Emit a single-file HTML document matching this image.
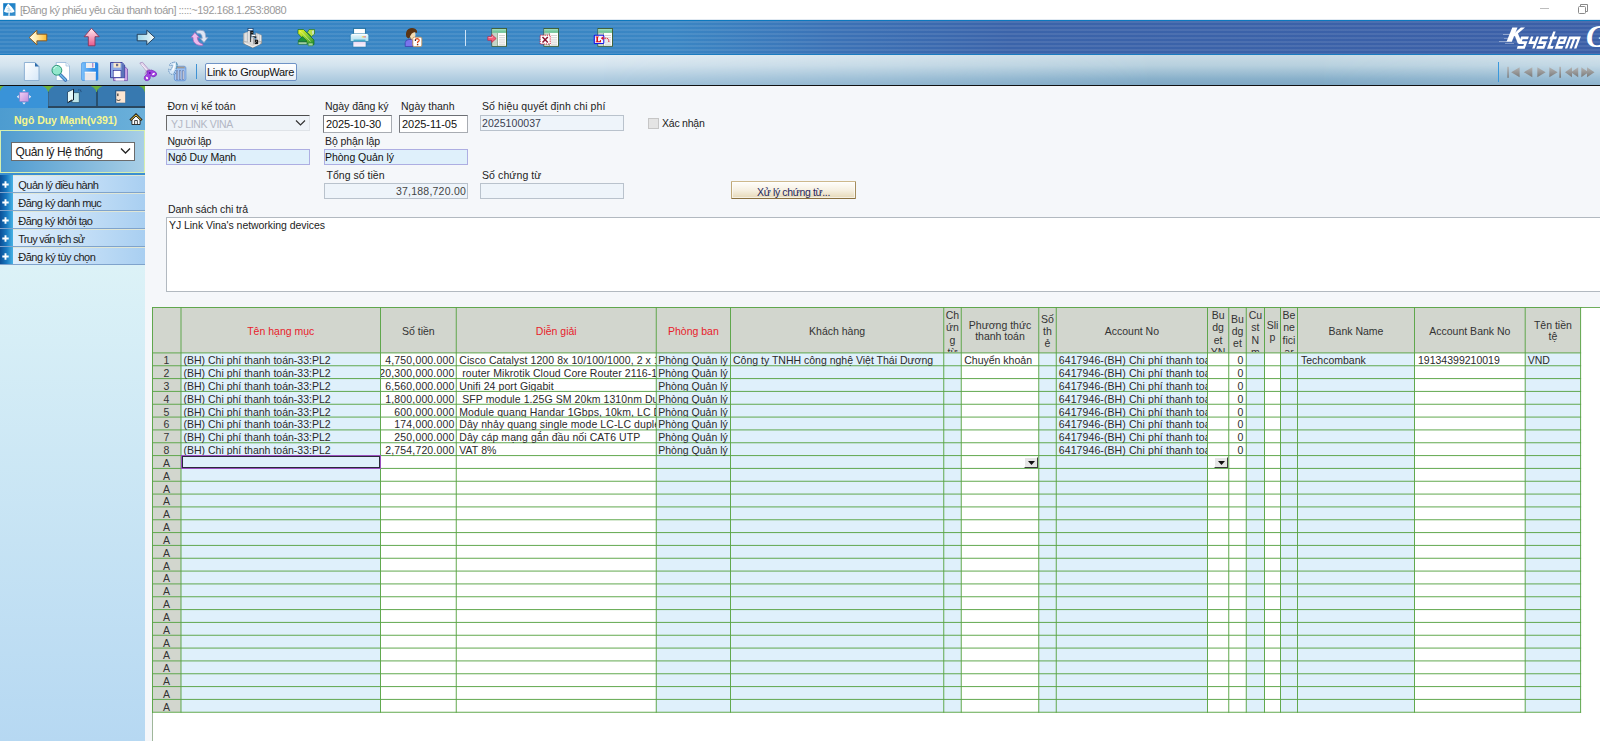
<!DOCTYPE html><html><head><meta charset="utf-8"><title>K</title><style>
*{box-sizing:border-box;margin:0;padding:0}
html,body{width:1600px;height:741px;overflow:hidden;background:#f5f7fa;font-family:"Liberation Sans",sans-serif;font-size:10.5px;color:#222}
.a{position:absolute}
.t{position:absolute;white-space:pre;line-height:13px;height:13px}
#title{left:0;top:0;width:1600px;height:20px;background:#fff}
#tb1{left:0;top:20px;width:1600px;height:35px;background:
 repeating-linear-gradient(180deg,rgba(255,255,255,0.085) 0,rgba(255,255,255,0.085) 2px,rgba(255,255,255,0) 2px,rgba(255,255,255,0) 4px),
 linear-gradient(90deg,#3583c3 0%,#3a86c4 42%,#3b72b6 52%,#3b64aa 63%,#3b5fa7 100%);
 border-top:1px solid #0d78bd;border-bottom:1px solid #1b7cc0}
#tb2{left:0;top:55px;width:1600px;height:30px;background:linear-gradient(180deg,#e3edf3 0%,#d3e3ee 35%,#b4cfe2 75%,#a3c4da 100%)}
#tb2r{left:600px;top:55px;width:1000px;height:30px;background:linear-gradient(180deg,#c9dbe5 0%,#b7d0de 35%,#88b0ca 80%,#7fa8c4 100%);-webkit-mask-image:linear-gradient(90deg,transparent 0,rgba(0,0,0,.5) 30%,#000 55%,#000 72%,rgba(0,0,0,.55) 100%);mask-image:linear-gradient(90deg,transparent 0,rgba(0,0,0,.5) 30%,#000 55%,#000 72%,rgba(0,0,0,.55) 100%)}
#tbl{left:0;top:85px;width:1600px;height:1px;background:#111}
#side{left:0;top:86px;width:145px;height:655px;background:linear-gradient(180deg,#dcf2f7 0,#dcf2f7 180px,#b6d8f2 100%)}
.inp{position:absolute;border:1px solid #b9c2cc;background:#eef4fa}
.lb{position:absolute;border:1px solid #adaee2;background:#dff0fb}
.wh{position:absolute;border:1px solid #a8acb2;border-top-color:#6c6f74;border-left-color:#77797e;background:#fff}
.mi{position:absolute;left:0;width:145px;height:18px;background:linear-gradient(90deg,#e4f1fc 0,#d4e8fa 30%,#a9cff1 100%);border-bottom:1px solid #7fa3cc;border-top:1px solid #dfe6d6}
.pl{position:absolute;left:0;top:-1px;width:12.500px;height:17px;background:linear-gradient(90deg,#0b4f96 0,#1878c0 50%,#48b2e4 100%)}
</style></head><body><div class="a" id="title"></div>
<svg class="a" style="left:2.500px;top:3.200px" width="13" height="13" viewBox="0 0 13 13"><defs><linearGradient id="gTi" x1="0" x2="1" y1="0" y2="1"><stop offset="0" stop-color="#0d78c4"/><stop offset="1" stop-color="#3a90cc"/></linearGradient></defs><rect x=".2" y=".2" width="12.300" height="12.600" fill="url(#gTi)"/><path d="M5.200 .4Q8.500 3 11.700 8.200Q11 9.600 8.500 9.700L6.700 9.500V12.800H5.300L5.600 9.500Q2.500 10 .9 8.600Q2.200 3.500 5.200 .4Z" fill="#fff"/><path d="M4.500 3.500L6 4.200M3.500 6L5.500 5.500L7.500 6.500M4 8L6 7L8.500 8M6 4.500V9" stroke="#9ccbe8" stroke-width=".6" fill="none"/></svg>
<div class="a" style="left:0;top:19px;width:1600px;height:1px;background:#e2eaf2"></div>
<div class="t" style="top:3.5px;color:#9a9a9a;font-size:11px;left:20px;letter-spacing:-0.503px;">[Đăng ký phiếu yêu cầu thanh toán] :::::~192.168.1.253:8080</div>
<div class="a" style="left:1540px;top:8px;width:9px;height:1px;background:#bdbdbd"></div>
<svg class="a" style="left:1578px;top:4px" width="10" height="10" viewBox="0 0 10 10"><path d="M2.500 2.500V.5h7v7h-2" fill="none" stroke="#8a8a8a" stroke-width="1"/><rect x=".5" y="2.500" width="7" height="7" rx="1" fill="#fff" stroke="#8a8a8a" stroke-width="1"/></svg>
<div class="a" id="tb1"></div>
<svg class="a" width="0" height="0" style="left:0;top:0"><defs>
<linearGradient id="gL" x1="0" x2="1"><stop offset="0" stop-color="#fffbea"/><stop offset=".45" stop-color="#ffe9a8"/><stop offset="1" stop-color="#fdb92c"/></linearGradient>
<linearGradient id="gU" x1="0" x2="0" y1="0" y2="1"><stop offset="0" stop-color="#fff0f4"/><stop offset=".5" stop-color="#f4a4c0"/><stop offset="1" stop-color="#e8588c"/></linearGradient>
<linearGradient id="gR" x1="0" x2="1"><stop offset="0" stop-color="#9ed6ea"/><stop offset=".6" stop-color="#cfeaf2"/><stop offset="1" stop-color="#f2fafc"/></linearGradient>
<linearGradient id="gDoc" x1="0" x2="1" y1="0" y2="1"><stop offset="0" stop-color="#ffffff"/><stop offset="1" stop-color="#d6e8f8"/></linearGradient>
<linearGradient id="gFl" x1="0" x2="1"><stop offset="0" stop-color="#7cc0fa"/><stop offset=".5" stop-color="#4a9ef0"/><stop offset="1" stop-color="#1f82e4"/></linearGradient>
<linearGradient id="gX" x1="0" x2="1" y1="0" y2="1"><stop offset="0" stop-color="#f4f820"/><stop offset=".5" stop-color="#8cd030"/><stop offset="1" stop-color="#1c8c30"/></linearGradient>
<linearGradient id="gPr" x1="0" x2="0" y1="0" y2="1"><stop offset="0" stop-color="#e8f6fa"/><stop offset="1" stop-color="#b0e0f0"/></linearGradient>
<linearGradient id="gPq" x1="0" x2="0" y1="0" y2="1"><stop offset="0" stop-color="#e4d0f0"/><stop offset="1" stop-color="#fbf6fd"/></linearGradient>
<linearGradient id="gTh" x1="0" x2="0" y1="0" y2="1"><stop offset="0" stop-color="#a8e0c0"/><stop offset="1" stop-color="#58b888"/></linearGradient>
<linearGradient id="gSq" x1="0" x2="1" y1="0" y2="1"><stop offset="0" stop-color="#f0d0f4"/><stop offset="1" stop-color="#c090dc"/></linearGradient>
<linearGradient id="gNav" x1="0" x2="0" y1="0" y2="1"><stop offset="0" stop-color="#b4b4b4"/><stop offset="1" stop-color="#7a7a7a"/></linearGradient>
</defs></svg>
<svg class="a" style="left:28px;top:29px" width="20" height="17" viewBox="0 0 20 17"><path d="M1.2 8.500L8.900 1.200V5.200H18.800V11.800H8.900V15.800Z" fill="url(#gL)" stroke="#8a5414" stroke-width="0.9" stroke-linejoin="round"/></svg>
<svg class="a" style="left:83px;top:27px" width="18" height="20" viewBox="0 0 18 20"><path d="M8.500 1.200L16.200 9.700H12V18.800H5.300V9.700H1.200Z" fill="url(#gU)" stroke="#8a3458" stroke-width="0.9" stroke-linejoin="round"/></svg>
<svg class="a" style="left:136px;top:29px" width="20" height="17" viewBox="0 0 20 17"><path d="M18.800 8.500L10.800 1.200V5.300H1.200V11.800H10.800V15.800Z" fill="url(#gR)" stroke="#1c3450" stroke-width="0.9" stroke-linejoin="round"/></svg>
<svg class="a" style="left:190px;top:29px" width="20" height="18" viewBox="0 0 20 18"><path d="M6 2.300Q10 0.300 13.500 1.800Q15.800 3.500 15.800 8.500L18 8.300L14 13.600L10.300 9.500L12.300 9.300Q12.200 6 10.500 4.700Q9 4 7.300 4.300Z" fill="#dfe6f4" stroke="#93a2c4" stroke-width="0.7"/><path d="M4.800 3.600L9.300 8.600L7.300 8.500Q7.500 11 9 13Q10.500 14.600 12.600 14.900L13 16.300Q6 17 3.600 12.500Q2.900 10.500 3 8.400L1.100 8.300Z" fill="#ecbcec" stroke="#a860b8" stroke-width="0.7"/></svg>
<svg class="a" style="left:242px;top:27px" width="22" height="22" viewBox="0 0 22 22"><path d="M1.300 14.300L10.500 12L19.700 14.300V16.400L10.800 20.800L1.300 16.400Z" fill="#d8d6d4" stroke="#7c7872" stroke-width="0.6"/><path d="M3 16.300L10.800 19.900L18 16.400" stroke="#f2f0ee" stroke-width="1.100" fill="none"/><path d="M1.500 6.600L5.800 4.800V14.900L1.500 14.400Z" fill="#f6f6f6" stroke="#8a8a8a" stroke-width="0.5"/><path d="M2.600 6.300V14.500M4.100 5.700V14.700" stroke="#c2c2c2" stroke-width="0.8"/><path d="M13.800 5.800L19.600 8.200V14.800L14.500 14Z" fill="#efefef" stroke="#8a8a8a" stroke-width="0.5"/><path d="M15.800 6.800V14.200M17.700 7.600V14.500" stroke="#c6c6c6" stroke-width="0.9"/><rect x="6" y="3.200" width="2.400" height="11.800" fill="#f4f4f4"/><rect x="6.700" y="3.500" width="0.800" height="11.500" fill="#bcbcbc"/><rect x="8.200" y="3.500" width="1" height="11.500" fill="#2a2a2a"/><rect x="6" y="1.400" width="5" height="2.300" fill="#fafafa" stroke="#123a6a" stroke-width="0.7"/><rect x="8.800" y="3.900" width="2.600" height="3.400" fill="#161616"/><rect x="9.700" y="5.200" width="0.800" height="0.800" fill="#ddd"/><rect x="9.400" y="7.600" width="4.400" height="1.900" fill="#fdfdfd" stroke="#555" stroke-width="0.4"/><rect x="10.800" y="9.500" width="3.500" height="1.300" fill="#0c0c0c"/><rect x="9.200" y="10.200" width="3.200" height="7" fill="#dcdcdc"/><rect x="11.200" y="10.800" width="1.200" height="6.400" fill="#9c9c9c"/><rect x="12.800" y="12.800" width="3.300" height="4.300" fill="#1a1a1a"/><rect x="14.200" y="13.800" width="0.800" height="0.800" fill="#ccc"/><rect x="13.300" y="15.300" width="0.700" height="0.700" fill="#bbb"/></svg>
<svg class="a" style="left:297px;top:28px" width="19" height="19" viewBox="0 0 19 19"><path d="M1 1.500H6.500L17 12V16.500H11L1 5.500Z" fill="url(#gX)" stroke="#146c24" stroke-width="0.7"/><path d="M12 1.500H17.500V6L14.500 8.500L10.500 4.500Z" fill="#b8e048" stroke="#2a7a28" stroke-width="0.7"/><path d="M15 3L16.800 2.200V6L15.500 7Z" fill="#cfe4d4"/><path d="M1.200 12.500L5.500 8.500L10 13V13.500H1.200Z" fill="#1c9038" stroke="#146c24" stroke-width="0.6"/><path d="M1.200 14H10V16.300H1.200Z" fill="#b4dcb0" stroke="#146c24" stroke-width="0.6"/><path d="M11.200 15H16V17.800H11.200Z" fill="#a4d4a0" stroke="#2a8a30" stroke-width="0.6"/><path d="M2.500 4L4 3.500L13.500 13.500" stroke="#e4f0c0" stroke-width="0.7" fill="none" opacity=".8"/></svg>
<svg class="a" style="left:349px;top:27px" width="22" height="21" viewBox="0 0 22 21"><rect x="4.600" y="1.400" width="11.800" height="6.500" fill="#fff" stroke="#1a6c9c" stroke-width="0.9"/><rect x="4" y="13" width="13" height="7" fill="url(#gPq)" stroke="#2a7cac" stroke-width="0.6"/><path d="M2.800 6.800H18.200L19.800 8.500V14.500H1.300V8.500Z" fill="url(#gPr)" stroke="#2a7cac" stroke-width="0.7"/><rect x="2.500" y="7" width="16" height="1.200" fill="#f6fcfe"/><rect x="4.500" y="12.600" width="12" height="1.300" fill="#3ca8c8"/><rect x="12.800" y="9.300" width="1.400" height="1.100" fill="#f0e040"/><rect x="14.200" y="9.300" width="1.400" height="1.100" fill="#f09040"/><rect x="15.600" y="9.300" width="1.200" height="1.100" fill="#f05070"/></svg>
<svg class="a" style="left:404px;top:27px" width="19" height="21" viewBox="0 0 19 21"><path d="M1.200 19.500V15.500Q1.500 12.800 5 12.500H9V19.500Z" fill="#7a74ec" stroke="#3030a0" stroke-width="0.6"/><path d="M4.500 5.500Q5 10 7 12Q9 13.500 10.500 12L11.500 8L11 4.500Z" fill="#f4dcb4"/><path d="M2.200 9.500Q1.200 4 4.500 2Q8 0.200 11.500 2Q13.800 3.500 13 6Q11.500 5 9.500 5.500Q7.500 6 6.500 8.500Q5.800 10.500 5 11.500Q3 11 2.200 9.500Z" fill="#5c3412"/><path d="M6.500 10.500Q7 11.500 6.800 12.800" stroke="#7a4a20" stroke-width="0.7" fill="none"/><rect x="8.800" y="10.200" width="9" height="9.400" rx="1.500" fill="#fff" stroke="#c89050" stroke-width="0.8"/><path d="M11.300 13.200Q11.500 11.600 13.300 11.600Q15.200 11.700 15.200 13.200Q15.200 14.300 13.600 15V16" fill="none" stroke="#e04818" stroke-width="1.300"/><circle cx="11.400" cy="13.200" r="0.7" fill="#111"/><rect x="12.900" y="16.800" width="1.400" height="1.500" fill="#902808"/></svg>
<div class="a" style="left:464.500px;top:29.500px;width:1.500px;height:16px;background:#cfe4f6"></div>
<svg class="a" style="left:487px;top:28px" width="21" height="20" viewBox="0 0 21 20"><rect x="5" y="0.500" width="14.500" height="17.800" fill="#fdfdfb" stroke="#3a5a2c" stroke-width="0.9"/><rect x="5.5" y="1" width="13.500" height="3.800" fill="url(#gTh)"/><rect x="5.5" y="5" width="5" height="12.800" fill="#c4d4c8"/><path d="M12 7.500h6M12 9.700h6M12 11.900h6M12 14.100h6M12 16.200h6" stroke="#c8c8c8" stroke-width="0.8"/><path d="M10.5 5v13" stroke="#6a8a6c" stroke-width="0.6"/><path d="M0.800 8.700H4.700V6.500L9.200 10.500L4.700 14.500V12.300H0.800Z" fill="#f46078" stroke="#c02848" stroke-width="0.7"/><path d="M1.500 9.500H5.300V8" stroke="#fcb0c0" stroke-width="0.8" fill="none"/></svg>
<svg class="a" style="left:539px;top:28px" width="21" height="20" viewBox="0 0 21 20"><rect x="5" y="0.500" width="14.500" height="17.800" fill="#fdfdfb" stroke="#3a5a2c" stroke-width="0.9"/><rect x="5.5" y="1" width="13.500" height="3.800" fill="url(#gTh)"/><rect x="5.5" y="5" width="5" height="12.800" fill="#c4d4c8"/><path d="M12 7.500h6M12 9.700h6M12 11.900h6M12 14.100h6M12 16.200h6" stroke="#c8c8c8" stroke-width="0.8"/><path d="M10.5 5v13" stroke="#6a8a6c" stroke-width="0.6"/><rect x="1.200" y="7.200" width="10" height="8.800" fill="#fff" stroke="#d81838" stroke-width="1" stroke-dasharray="1.200 1"/><path d="M3.500 9L8.800 14.500M8.800 9L3.500 14.500" stroke="#8a1430" stroke-width="1.500"/></svg>
<svg class="a" style="left:593px;top:28px" width="21" height="20" viewBox="0 0 21 20"><rect x="5" y="0.500" width="14.500" height="17.800" fill="#fdfdfb" stroke="#3a5a2c" stroke-width="0.9"/><rect x="5.5" y="1" width="13.500" height="3.800" fill="url(#gTh)"/><rect x="5.5" y="5" width="5" height="12.800" fill="#c4d4c8"/><path d="M12 7.500h6M12 9.700h6M12 11.900h6M12 14.100h6M12 16.200h6" stroke="#c8c8c8" stroke-width="0.8"/><path d="M10.5 5v13" stroke="#6a8a6c" stroke-width="0.6"/><rect x="1.300" y="7.200" width="9.500" height="8.300" rx="0.800" fill="#f4f4ff" stroke="#1818e8" stroke-width="1.100"/><path d="M2.600 8.500H5.800V9.300H5V13.300H6.600L7.300 11.900H8V14.200H2.600V13.400H3.400V9.300H2.600Z" fill="#e01010"/><path d="M8.500 10.200H13.500Q16.200 10.500 15.800 14" fill="none" stroke="#e01828" stroke-width="1" stroke-dasharray="2 0.800"/><path d="M10.300 8.200L8 10.200L10.300 12.200Z" fill="#e01828"/></svg>
<div class="a" style="left:1503px;top:33.700px;width:7px;height:1px;background:rgba(255,255,255,.4)"></div><div class="a" style="left:1503.500px;top:38px;width:5px;height:1.200px;background:rgba(255,255,255,.3)"></div><div class="a" style="left:1499px;top:41.200px;width:8px;height:1px;background:rgba(255,255,255,.4)"></div><div class="a" style="left:1505px;top:43px;width:9px;height:1px;background:rgba(255,255,255,.35)"></div>
<svg class="a" style="left:1500px;top:26px" width="28" height="20" viewBox="0 0 28 20"><path d="M12.300 1.600H17.500L11.800 15.700H6.500Z" fill="#fff"/><path d="M20.800 1.600H25L14.500 10.500L13 8.500Z" fill="#fff"/><path d="M14.300 8.200L17.500 6.500L22.300 17.600H17.800Z" fill="#fff"/></svg>
<svg class="a" style="left:1510px;top:30px" width="80" height="20" viewBox="0 0 80 20"><g transform="translate(11.200 6.600) skewX(-20) scale(.895 1)"><path d="M8.5 1.200H1.3V6H7.5V10.800H0 M12.3 0V6H18.5M18.5 0V12 M30.3 1.200H23.1V6H29.3V10.800H21.8 M35.1 -5V10.800H40.1M32.6 1.200H40.1 M43.7 6H50.2V1.200H43.7V10.800H50.900000000000006 M55.0 12V1.200H65.2V12M60.1 1.200V12" fill="none" stroke="#fff" stroke-width="2.700" stroke-linejoin="miter"/></g></svg>
<div class="t" style="left:1586px;top:21px;height:32px;line-height:32px;font-family:'Liberation Serif',serif;font-size:31px;font-weight:bold;font-style:italic;color:#fff">G</div>
<div class="a" id="tb2"></div><div class="a" id="tb2r"></div><div class="a" id="tbl"></div>
<svg class="a" style="left:23px;top:61px" width="18" height="21" viewBox="0 0 18 21"><path d="M1.400 1.500H12L16 5.500V19.500H1.400Z" fill="url(#gDoc)" stroke="#86acd0" stroke-width="0.9"/><path d="M12 1.500L16 5.500H12Z" fill="#2c6cac"/></svg>
<svg class="a" style="left:50px;top:61px" width="22" height="21" viewBox="0 0 22 21"><path d="M6.200 1.500H16L19.500 5V19.500H6.200Z" fill="#fff" stroke="#9cbcdc" stroke-width="0.9"/><path d="M16 1.500V5H19.500" fill="#eef6fc" stroke="#9cbcdc" stroke-width="0.7"/><path d="M10 13.500L15.500 19" stroke="#2c5cb0" stroke-width="3.200" stroke-linecap="round"/><path d="M10 13.500L15.500 19" stroke="#6cb4e0" stroke-width="2" stroke-linecap="round"/><circle cx="6.900" cy="9.300" r="4.900" fill="#92e8cc" stroke="#1c8c6c" stroke-width="0.9"/><path d="M3.800 8Q4.500 5.500 7 5.200" stroke="#d4fcec" stroke-width="1" fill="none"/></svg>
<svg class="a" style="left:80px;top:61px" width="20" height="21" viewBox="0 0 20 21"><path d="M1.500 3Q1.500 1.600 3 1.600H16.500Q18 1.600 18 3V18Q18 19.500 16.500 19.500H3Q1.500 19.500 1.500 18Z" fill="url(#gFl)" stroke="#3a8ce0" stroke-width="0.6"/><rect x="6" y="1.800" width="9" height="5.200" fill="#f0eef0"/><rect x="12" y="2" width="1.400" height="4.500" fill="#b090c8"/><rect x="4.800" y="10.800" width="11" height="8.800" fill="#e8e6ea"/><path d="M4.800 10.800H15.800V12H4.800Z" fill="#f8f8fa"/></svg>
<svg class="a" style="left:109px;top:61px" width="20" height="21" viewBox="0 0 20 21"><path d="M4.500 5H15L18.500 8V19.600H4.500Z" fill="#cca4e4" stroke="#6848a8" stroke-width="0.7"/><rect x="6.500" y="17" width="8.500" height="2.600" fill="#fbf8fd"/><path d="M1.500 1.500H13L15.600 4V16.700H1.500Z" fill="#8eaae4" stroke="#20208c" stroke-width="0.8"/><path d="M12.500 2V16.500H15.400V4.200Z" fill="#5c74b8"/><rect x="4.500" y="1.800" width="7" height="4.800" fill="#f8e8c8"/><rect x="7" y="2.800" width="2.200" height="2.400" fill="#6a6a90"/><rect x="4.200" y="9.500" width="7.800" height="7" fill="#fff" stroke="#20208c" stroke-width="0.6"/></svg>
<svg class="a" style="left:138px;top:61px" width="21" height="21" viewBox="0 0 21 21"><path d="M1.800 2L4.500 1.200L11.500 9.500L9.500 11.500Z" fill="#e4d4ec" stroke="#a488bc" stroke-width="0.7"/><path d="M3.500 3.500L9.500 10" stroke="#fff" stroke-width="0.8"/><path d="M7 13.500L9 9.500L12 8.500" fill="none" stroke="#b498c8" stroke-width="1.400"/><path d="M9 10L13.500 9Q18.500 10.500 18.800 13Q18.500 15.500 15 16L12.500 14.500L12 18Q10 20.500 7.500 19.500Q5.500 18 6.500 15.500L9 13Z" fill="#a040e0" stroke="#7020b0" stroke-width="0.6"/><ellipse cx="9" cy="17" rx="1" ry="1.400" fill="#fff" transform="rotate(-30 9 17)"/><ellipse cx="15.500" cy="13" rx="1.500" ry="1" fill="#fff" transform="rotate(-30 15.500 13)"/><circle cx="11.800" cy="12" r="1" fill="#6010a8"/></svg>
<svg class="a" style="left:167px;top:61px" width="21" height="21" viewBox="0 0 21 21"><path d="M7.300 6.800Q7.500 5.300 9 5.200H17Q18.700 5.300 18.900 6.800V18Q18.700 19.700 17 19.800H9.300Q7.500 19.700 7.300 18Z" fill="#8ab6f0" stroke="#5c8cd0" stroke-width="0.7"/><path d="M8.500 5.600H17.600V7.300H8.500Z" fill="#a39a90"/><path d="M8 8.500H18.300V18.500H8Z" fill="#a8c8f6"/><rect x="9.300" y="9.800" width="1.500" height="8.700" fill="#e8e6e8" stroke="#405a90" stroke-width="0.5"/><rect x="12.400" y="9.800" width="1.500" height="8.700" fill="#f4f4f6" stroke="#304a88" stroke-width="0.5"/><rect x="15.500" y="9.800" width="1.500" height="8.700" fill="#e8e6e8" stroke="#405a90" stroke-width="0.5"/><path d="M6.500 1.300Q9.500 0.600 10.300 2.500Q10.800 5 8.800 8.800L7.200 11.300L9 12.500L4.500 13.300L2 11.500L1.700 8L3.500 9Q5.300 6.500 5.800 4.300Q4.500 4 3 5L2.500 3.500Q4 1.800 6.500 1.300Z" fill="#d6e8f8" stroke="#2c64a4" stroke-width="0.6" stroke-dasharray="1.500 0.700"/><path d="M7 2.500Q8 5 5.500 9.500" stroke="#fff" stroke-width="1.300" fill="none"/><path d="M9.500 2Q10.500 4.500 9 8" stroke="#5c9cb8" stroke-width="1" fill="none"/></svg>
<div class="a" style="left:195.500px;top:63.500px;width:1px;height:15px;background:#3f92d4"></div>
<div class="a" style="left:1498.400px;top:61.500px;width:1px;height:20.500px;background:#3a98dc"></div>
<svg class="a" style="left:1506.5px;top:65.5px" width="90" height="13" viewBox="0 0 90 13"><rect x="0.300" y="0.800" width="1.500" height="11" fill="url(#gNav)"/><path d="M12.600 1.200V11.200L4.200 6.200Z" fill="url(#gNav)"/><path d="M25.300 1.200V11.200L16.800 6.200Z" fill="url(#gNav)"/><path d="M30.300 1.200V11.200L38.600 6.200Z" fill="url(#gNav)"/><path d="M42.300 1.200V11.200L50.600 6.200Z" fill="url(#gNav)"/><rect x="52.300" y="0.800" width="1.700" height="11" fill="url(#gNav)"/><path d="M65 1.200V11.200L58 6.200ZM71.200 1.200V11.200L64 6.200Z" fill="url(#gNav)"/><path d="M74.300 1.200V11.200L81.500 6.200ZM80 1.200V11.200L87.500 6.200Z" fill="url(#gNav)"/></svg>
<div class="a" style="left:205px;top:63px;width:92px;height:18px;border:1px solid #6f93c6;border-radius:2px;background:linear-gradient(180deg,#fff,#e9eef5)"></div>
<div class="t" style="top:66px;color:#111;font-size:11px;left:207px;letter-spacing:-0.290px;">Link to GroupWare</div>
<div class="a" id="side"></div>
<div class="a" style="left:0;top:86px;width:145px;height:7px;background:#6cb23e"></div>
<div class="a" style="left:0;top:86px;width:3.500px;height:6px;background:#6cb23e;clip-path:polygon(0 0,100% 0,0 100%)"></div>
<div class="a" style="left:0;top:86px;width:48.300px;height:22.500px;background:#3993d8;clip-path:polygon(0 5px,1px 2.500px,2.500px 1px,4px 0,calc(100% - 6px) 0,calc(100% - 3.200px) 1.500px,calc(100% - 1.300px) 3.500px,100% 6.500px,100% 100%,0 100%)"></div>
<div class="a" style="left:48.300px;top:86px;width:48.300px;height:22.500px;background:#3779b0;border-left:1px solid #27506f;clip-path:polygon(0 6.500px,1.300px 3.500px,3.200px 1.500px,6px 0,calc(100% - 6px) 0,calc(100% - 3.200px) 1.500px,calc(100% - 1.300px) 3.500px,100% 6.500px,100% 100%,0 100%)"></div>
<div class="a" style="left:96.600px;top:86px;width:48.400px;height:22.500px;background:#3779b0;border-left:1px solid #27506f;clip-path:polygon(0 6.500px,1.300px 3.500px,3.200px 1.500px,6px 0,calc(100% - 6px) 0,calc(100% - 3.200px) 1.500px,calc(100% - 1.300px) 3.500px,100% 6.500px,100% 100%,0 100%)"></div>
<div class="a" style="left:48.300px;top:105.800px;width:96.700px;height:2.700px;background:#2a475f"></div>
<div class="a" style="left:96.100px;top:92px;width:1px;height:14px;background:#27506f"></div>
<svg class="a" style="left:16px;top:88px" width="17" height="17" viewBox="0 0 17 17"><rect x="3.800" y="4.400" width="8.400" height="8.900" fill="url(#gSq)" stroke="#b47cd0" stroke-width="0.5"/><path d="M0.800 8.800L2.800 7V10.600ZM15.200 8.800L13.200 7V10.600ZM8 1.200L6.200 3.200H9.800ZM8 16.400L6.200 14.400H9.800Z" fill="#f4ecfa"/></svg>
<svg class="a" style="left:66px;top:88px" width="16" height="16" viewBox="0 0 16 16"><path d="M6 4.600H13.300V14.600H6Z" fill="#bfe6ea" stroke="#1c4c6c" stroke-width="0.7"/><path d="M1.500 4L7.500 1.200V12L1.500 15Z" fill="#e6f9f9" stroke="#1c3c5c" stroke-width="0.8"/><path d="M7.500 1.200V12" stroke="#0c1c2c" stroke-width="1"/><path d="M2.300 14.200L6.200 11.800" stroke="#0a0a0a" stroke-width="1"/><path d="M13.200 2.300L14.200 1.300M14.600 3.600H15.600M14 2.900L15.200 2.200M12.500 1.500V2.300" stroke="#1c3c64" stroke-width="0.7"/></svg>
<svg class="a" style="left:114px;top:89px" width="13" height="16" viewBox="0 0 13 16"><rect x="1.700" y="1.800" width="9.800" height="12.200" fill="#fde6d2"/><path d="M1.700 14V1.800H11.500" fill="none" stroke="#1c5084" stroke-width="1.100"/><path d="M11.500 1.800V14H1.700" fill="none" stroke="#3a6c98" stroke-width="0.6"/><rect x="3.300" y="4.500" width="1.100" height="2.600" fill="#222"/><path d="M2.500 10.800Q4.500 12.200 6.500 10.800" fill="none" stroke="#222" stroke-width="0.9"/></svg>
<div class="a" style="left:0;top:108.400px;width:145px;height:22.600px;background:linear-gradient(90deg,#4d9cd0,#5fa8d6 60%,#6bb0da)"></div>
<div class="t" style="top:113.8px;color:#f6f78f;font-weight:bold;left:14px;letter-spacing:-0.048px;">Ngô Duy Mạnh(v391)</div>
<svg class="a" style="left:129px;top:113px" width="14" height="13" viewBox="0 0 14 13"><path d="M2.900 6.500V11.500H11.100V6.500L7 2.800Z" fill="#fff" stroke="#1c1c1c" stroke-width="0.9"/><path d="M1.200 7.300L7 1.700L12.800 7.300" fill="none" stroke="#1c1c1c" stroke-width="2.300"/><path d="M1.600 7L7 1.900L12.400 7" fill="none" stroke="#f4cc3c" stroke-width="1"/><rect x="5.700" y="7.600" width="2.600" height="3.900" fill="#fff" stroke="#1c1c1c" stroke-width="0.8"/></svg>
<div class="a" style="left:0;top:130px;width:145px;height:43px;border:1px solid #d6efae;background:linear-gradient(90deg,#4f9bcf 0,#7fb7dc 55%,#a9cfe6 100%)"></div>
<div class="a" style="left:11px;top:142px;width:124px;height:19px;border:1px solid #6b6b6b;background:#fff"></div>
<div class="t" style="top:145.8px;color:#222;font-size:12px;left:15.5px;letter-spacing:-0.400px;">Quản lý Hệ thống</div>
<svg class="a" style="left:120px;top:147px" width="11" height="8" viewBox="0 0 11 8"><path d="M1 1.500l4.500 4.500L10 1.500" fill="none" stroke="#222" stroke-width="1.300"/></svg>
<div class="a" style="left:0;top:172.500px;width:145px;height:3.500px;background:#3b8fd0"></div>
<div class="mi" style="top:175px"><div class="pl"></div><svg class="a" style="left:2.400px;top:4.500px" width="7" height="7" viewBox="0 0 7 7"><path d="M3.500 0.300v6.400M0.300 3.500h6.400" stroke="#fff" stroke-width="1.900"/></svg></div>
<div class="t" style="top:178.6px;color:#222;font-size:11px;left:18.3px;letter-spacing:-0.547px;">Quản lý điều hành</div>
<div class="mi" style="top:193px"><div class="pl"></div><svg class="a" style="left:2.400px;top:4.500px" width="7" height="7" viewBox="0 0 7 7"><path d="M3.500 0.300v6.400M0.300 3.500h6.400" stroke="#fff" stroke-width="1.900"/></svg></div>
<div class="t" style="top:196.6px;color:#222;font-size:11px;left:18.3px;letter-spacing:-0.545px;">Đăng ký danh mục</div>
<div class="mi" style="top:211px"><div class="pl"></div><svg class="a" style="left:2.400px;top:4.500px" width="7" height="7" viewBox="0 0 7 7"><path d="M3.500 0.300v6.400M0.300 3.500h6.400" stroke="#fff" stroke-width="1.900"/></svg></div>
<div class="t" style="top:214.6px;color:#222;font-size:11px;left:18.3px;letter-spacing:-0.565px;">Đăng ký khởi tạo</div>
<div class="mi" style="top:229px"><div class="pl"></div><svg class="a" style="left:2.400px;top:4.500px" width="7" height="7" viewBox="0 0 7 7"><path d="M3.500 0.300v6.400M0.300 3.500h6.400" stroke="#fff" stroke-width="1.900"/></svg></div>
<div class="t" style="top:232.6px;color:#222;font-size:11px;left:18.3px;letter-spacing:-0.742px;">Truy vấn lịch sử</div>
<div class="mi" style="top:247px"><div class="pl"></div><svg class="a" style="left:2.400px;top:4.500px" width="7" height="7" viewBox="0 0 7 7"><path d="M3.500 0.300v6.400M0.300 3.500h6.400" stroke="#fff" stroke-width="1.900"/></svg></div>
<div class="t" style="top:250.6px;color:#222;font-size:11px;left:18.3px;letter-spacing:-0.500px;">Đăng ký tùy chọn</div>
<div class="t" style="top:100px;color:#222;left:167.5px;letter-spacing:-0.012px;">Đơn vị kế toán</div>
<div class="t" style="top:100px;color:#222;left:325px;letter-spacing:-0.060px;">Ngày đăng ký</div>
<div class="t" style="top:100px;color:#222;left:401px;letter-spacing:-0.022px;">Ngày thanh</div>
<div class="t" style="top:100px;color:#222;left:482px;letter-spacing:0.102px;">Số hiệu quyết định chi phí</div>
<div class="t" style="top:134.5px;color:#222;left:167.5px;letter-spacing:-0.345px;">Người lập</div>
<div class="t" style="top:134.5px;color:#222;left:325px;letter-spacing:-0.097px;">Bộ phận lập</div>
<div class="t" style="top:168.8px;color:#222;left:326.5px;letter-spacing:0.017px;">Tổng số tiền</div>
<div class="t" style="top:168.8px;color:#222;left:482px;letter-spacing:0.098px;">Số chứng từ</div>
<div class="t" style="top:203px;color:#222;left:168px;letter-spacing:-0.101px;">Danh sách chi trả</div>
<div class="a" style="left:166px;top:115px;width:144px;height:16px;background:#eef3f8;border-top:1px solid #4d4d4d;border-left:1px solid #6a6a6a;border-bottom:1px solid #dfe3e8;border-right:1px solid #dfe3e8"></div>
<div class="t" style="top:117.5px;color:#b3b7c4;left:171px;letter-spacing:-0.329px;">YJ LINK VINA</div>
<svg class="a" style="left:295px;top:119px" width="11" height="8" viewBox="0 0 11 8"><path d="M1 1.500l4.500 4.500L10 1.500" fill="none" stroke="#333" stroke-width="1.200"/></svg>
<div class="wh" style="left:323px;top:114.500px;width:69px;height:18.500px"></div>
<div class="wh" style="left:399px;top:114.500px;width:69px;height:18.500px"></div>
<div class="t" style="top:117.8px;color:#111;font-size:11px;left:326px;letter-spacing:-0.128px;">2025-10-30</div>
<div class="t" style="top:117.8px;color:#111;font-size:11px;left:402px;letter-spacing:-0.045px;">2025-11-05</div>
<div class="inp" style="left:480px;top:115px;width:144px;height:16px"></div>
<div class="t" style="top:116.7px;color:#3a4050;left:482px;letter-spacing:0.059px;">2025100037</div>
<div class="a" style="left:648px;top:117.500px;width:11px;height:11px;background:#e4e4e4;border:1px solid #c6c6c6"></div>
<div class="t" style="top:117px;color:#222;left:662px;letter-spacing:-0.234px;">Xác nhận</div>
<div class="lb" style="left:166px;top:149px;width:144px;height:16px"></div>
<div class="lb" style="left:323.500px;top:149px;width:144px;height:16px"></div>
<div class="t" style="top:150.5px;color:#111;left:168px;letter-spacing:-0.171px;">Ngô Duy Mạnh</div>
<div class="t" style="top:150.5px;color:#111;left:325px;letter-spacing:-0.036px;">Phòng Quản lý</div>
<div class="inp" style="left:323.500px;top:183px;width:144px;height:16px"></div>
<div class="inp" style="left:480px;top:183px;width:144px;height:16px"></div>
<div class="t" style="top:184.5px;color:#444;right:1134px;letter-spacing:0.219px;">37,188,720.00</div>
<div class="a" style="left:731px;top:181px;width:125px;height:18px;border:1px solid #a48c5c;border-top-color:#cdb88c;border-left-color:#bfa878;border-bottom-color:#8a7040;border-radius:1px;background:linear-gradient(180deg,#fffefb 0,#f6f0e2 50%,#e6d9b8 100%);box-shadow:inset 0 0 0 1px rgba(255,255,255,.6)"></div>
<div class="t" style="top:185.5px;color:#24245c;left:593.5px;width:400px;text-align:center;letter-spacing:-0.346px;">Xử lý chứng từ...</div>
<div class="a" style="left:166px;top:217px;width:1440px;height:75px;background:#fff;border:1px solid #b2b9c0"></div>
<div class="t" style="top:219px;color:#222;left:169px;letter-spacing:-0.050px;">YJ Link Vina&#x27;s networking devices</div>
<div class="a" style="left:152px;top:307px;width:1460px;height:440px;background:#fff;border-top:1px solid #6fae5c;border-left:1px solid #9fb69a"></div>
<div class="a" style="left:152px;top:307px;width:1428.6px;height:45.91699999999997px;background:#d2d6ce"></div>
<div class="a" style="left:152px;top:352.917px;width:29px;height:359.33324px;background:#d2d6ce"></div>
<div class="a" style="left:181px;top:352.917px;width:199.5px;height:359.33324px;background:#dff0fb"></div>
<div class="a" style="left:380.5px;top:352.917px;width:75.75px;height:359.33324px;background:#fff"></div>
<div class="a" style="left:456.25px;top:352.917px;width:200.0px;height:359.33324px;background:#fff"></div>
<div class="a" style="left:656.25px;top:352.917px;width:74.25px;height:359.33324px;background:#dff0fb"></div>
<div class="a" style="left:730.5px;top:352.917px;width:213.25px;height:359.33324px;background:#dff0fb"></div>
<div class="a" style="left:943.75px;top:352.917px;width:17.5px;height:359.33324px;background:#dff0fb"></div>
<div class="a" style="left:961.25px;top:352.917px;width:77.5px;height:359.33324px;background:#fff"></div>
<div class="a" style="left:1038.75px;top:352.917px;width:17.5px;height:359.33324px;background:#dff0fb"></div>
<div class="a" style="left:1056.25px;top:352.917px;width:151.25px;height:359.33324px;background:#dff0fb"></div>
<div class="a" style="left:1207.5px;top:352.917px;width:21.25px;height:359.33324px;background:#fff"></div>
<div class="a" style="left:1228.75px;top:352.917px;width:17.5px;height:359.33324px;background:#fff"></div>
<div class="a" style="left:1246.25px;top:352.917px;width:18.25px;height:359.33324px;background:#dff0fb"></div>
<div class="a" style="left:1264.5px;top:352.917px;width:16.0px;height:359.33324px;background:#fff"></div>
<div class="a" style="left:1280.5px;top:352.917px;width:17.0px;height:359.33324px;background:#dff0fb"></div>
<div class="a" style="left:1297.5px;top:352.917px;width:117.0px;height:359.33324px;background:#dff0fb"></div>
<div class="a" style="left:1414.5px;top:352.917px;width:110.70000000000005px;height:359.33324px;background:#fff"></div>
<div class="a" style="left:1525.2px;top:352.917px;width:55.399999999999864px;height:359.33324px;background:#dff0fb"></div>
<svg class="a" style="left:152px;top:307px" width="1431" height="407"><path d="M0 0.5H1429.6M0 45.917H1429.10M0 58.750H1429.10M0 71.584H1429.10M0 84.417H1429.10M0 97.250H1429.10M0 110.084H1429.10M0 122.917H1429.10M0 135.750H1429.10M0 148.584H1429.10M0 161.417H1429.10M0 174.250H1429.10M0 187.084H1429.10M0 199.917H1429.10M0 212.750H1429.10M0 225.584H1429.10M0 238.417H1429.10M0 251.250H1429.10M0 264.084H1429.10M0 276.917H1429.10M0 289.750H1429.10M0 302.584H1429.10M0 315.417H1429.10M0 328.250H1429.10M0 341.084H1429.10M0 353.917H1429.10M0 366.750H1429.10M0 379.584H1429.10M0 392.417H1429.10M0 405.250H1429.10M0.50 0V405.75M29.00 0V405.75M228.50 0V405.75M304.25 0V405.75M504.25 0V405.75M578.50 0V405.75M791.75 0V405.75M809.25 0V405.75M886.75 0V405.75M904.25 0V405.75M1055.50 0V405.75M1076.75 0V405.75M1094.25 0V405.75M1112.50 0V405.75M1128.50 0V405.75M1145.50 0V405.75M1262.50 0V405.75M1373.20 0V405.75M1428.60 0V405.75" fill="none" stroke="#5aa446" stroke-width="0.95"/></svg>
<div class="t" style="top:324.56px;color:#e8212b;left:80.75px;width:400px;text-align:center;">Tên hạng mục</div>
<div class="t" style="top:324.56px;color:#333;left:218.375px;width:400px;text-align:center;">Số tiền</div>
<div class="t" style="top:324.56px;color:#e8212b;left:356.25px;width:400px;text-align:center;">Diễn giải</div>
<div class="t" style="top:324.56px;color:#e8212b;left:493.375px;width:400px;text-align:center;">Phòng ban</div>
<div class="t" style="top:324.56px;color:#333;left:637.125px;width:400px;text-align:center;">Khách hàng</div>
<div class="t" style="top:318.81px;color:#333;left:800.0px;width:400px;text-align:center;">Phương thức</div>
<div class="t" style="top:330.31px;color:#333;left:800.0px;width:400px;text-align:center;">thanh toán</div>
<div class="t" style="top:324.56px;color:#333;left:931.875px;width:400px;text-align:center;">Account No</div>
<div class="t" style="top:324.56px;color:#333;left:1156.0px;width:400px;text-align:center;">Bank Name</div>
<div class="t" style="top:324.56px;color:#333;left:1269.85px;width:400px;text-align:center;">Account Bank No</div>
<div class="t" style="top:318.81px;color:#333;left:1352.9px;width:400px;text-align:center;">Tên tiền</div>
<div class="t" style="top:330.31px;color:#333;left:1352.9px;width:400px;text-align:center;">tệ</div>
<div class="a" style="left:943.75px;top:308px;width:17.5px;height:44.41699999999997px;overflow:hidden;text-align:center;color:#333"><div style="position:absolute;left:0;right:0;top:1px"><div style="height:12.3px;line-height:12.3px">Ch</div><div style="height:12.3px;line-height:12.3px">ứn</div><div style="height:12.3px;line-height:12.3px">g</div><div style="height:12.3px;line-height:12.3px">từ</div></div></div>
<div class="a" style="left:1038.75px;top:308px;width:17.5px;height:44.41699999999997px;overflow:hidden;text-align:center;color:#333"><div style="position:absolute;left:0;right:0;top:4.5px"><div style="height:12.3px;line-height:12.3px">Số</div><div style="height:12.3px;line-height:12.3px">th</div><div style="height:12.3px;line-height:12.3px">ẻ</div></div></div>
<div class="a" style="left:1207.5px;top:308px;width:21.25px;height:44.41699999999997px;overflow:hidden;text-align:center;color:#333"><div style="position:absolute;left:0;right:0;top:1px"><div style="height:12.3px;line-height:12.3px">Bu</div><div style="height:12.3px;line-height:12.3px">dg</div><div style="height:12.3px;line-height:12.3px">et</div><div style="height:12.3px;line-height:12.3px">YN</div></div></div>
<div class="a" style="left:1228.75px;top:308px;width:17.5px;height:44.41699999999997px;overflow:hidden;text-align:center;color:#333"><div style="position:absolute;left:0;right:0;top:4.5px"><div style="height:12.3px;line-height:12.3px">Bu</div><div style="height:12.3px;line-height:12.3px">dg</div><div style="height:12.3px;line-height:12.3px">et</div></div></div>
<div class="a" style="left:1246.25px;top:308px;width:18.25px;height:44.41699999999997px;overflow:hidden;text-align:center;color:#333"><div style="position:absolute;left:0;right:0;top:1px"><div style="height:12.3px;line-height:12.3px">Cu</div><div style="height:12.3px;line-height:12.3px">st</div><div style="height:12.3px;line-height:12.3px">N</div><div style="height:12.3px;line-height:12.3px">m</div></div></div>
<div class="a" style="left:1264.5px;top:308px;width:16.0px;height:44.41699999999997px;overflow:hidden;text-align:center;color:#333"><div style="position:absolute;left:0;right:0;top:10.5px"><div style="height:12.3px;line-height:12.3px">Sli</div><div style="height:12.3px;line-height:12.3px">p</div></div></div>
<div class="a" style="left:1280.5px;top:308px;width:17.0px;height:44.41699999999997px;overflow:hidden;text-align:center;color:#333"><div style="position:absolute;left:0;right:0;top:1px"><div style="height:12.3px;line-height:12.3px">Be</div><div style="height:12.3px;line-height:12.3px">ne</div><div style="height:12.3px;line-height:12.3px">fici</div><div style="height:12.3px;line-height:12.3px">ar</div></div></div>
<div class="a" style="left:152.5px;top:353.42px;width:28px;height:12.33px;overflow:hidden"><div class="t" style="left:0;right:0;text-align:center;top:0.900px;color:#333">1</div></div>
<div class="a" style="left:181.5px;top:353.42px;width:198.5px;height:12.33px;overflow:hidden"><div class="t" style="left:2px;top:0.900px;color:#2a2a2a;letter-spacing:0px">(BH) Chi phí thanh toán-33:PL2</div></div>
<div class="a" style="left:381.0px;top:353.42px;width:74.75px;height:12.33px;overflow:hidden"><div class="t" style="right:1.35px;top:0.900px;color:#2a2a2a;letter-spacing:0.15px">4,750,000.000</div></div>
<div class="a" style="left:456.75px;top:353.42px;width:199.0px;height:12.33px;overflow:hidden"><div class="t" style="left:2.5px;top:0.900px;color:#2a2a2a;letter-spacing:0.08px">Cisco Catalyst 1200 8x 10/100/1000, 2 x 10G SFP+</div></div>
<div class="a" style="left:656.75px;top:353.42px;width:73.25px;height:12.33px;overflow:hidden"><div class="t" style="left:1.5px;top:0.900px;color:#2a2a2a;letter-spacing:0px">Phòng Quản lý</div></div>
<div class="a" style="left:1056.75px;top:353.42px;width:150.25px;height:12.33px;overflow:hidden"><div class="t" style="left:2px;top:0.900px;color:#2a2a2a;letter-spacing:0.1px">6417946-(BH) Chi phí thanh toán</div></div>
<div class="a" style="left:1229.25px;top:353.42px;width:16.5px;height:12.33px;overflow:hidden"><div class="t" style="right:2.5px;top:0.900px;color:#2a2a2a;letter-spacing:0px">0</div></div>
<div class="a" style="left:152.5px;top:366.25px;width:28px;height:12.33px;overflow:hidden"><div class="t" style="left:0;right:0;text-align:center;top:0.900px;color:#333">2</div></div>
<div class="a" style="left:181.5px;top:366.25px;width:198.5px;height:12.33px;overflow:hidden"><div class="t" style="left:2px;top:0.900px;color:#2a2a2a;letter-spacing:0px">(BH) Chi phí thanh toán-33:PL2</div></div>
<div class="a" style="left:381.0px;top:366.25px;width:74.75px;height:12.33px;overflow:hidden"><div class="t" style="right:1.35px;top:0.900px;color:#2a2a2a;letter-spacing:0.15px">20,300,000.000</div></div>
<div class="a" style="left:456.75px;top:366.25px;width:199.0px;height:12.33px;overflow:hidden"><div class="t" style="left:2.5px;top:0.900px;color:#2a2a2a;letter-spacing:0.08px"> router Mikrotik Cloud Core Router 2116-12</div></div>
<div class="a" style="left:656.75px;top:366.25px;width:73.25px;height:12.33px;overflow:hidden"><div class="t" style="left:1.5px;top:0.900px;color:#2a2a2a;letter-spacing:0px">Phòng Quản lý</div></div>
<div class="a" style="left:1056.75px;top:366.25px;width:150.25px;height:12.33px;overflow:hidden"><div class="t" style="left:2px;top:0.900px;color:#2a2a2a;letter-spacing:0.1px">6417946-(BH) Chi phí thanh toán</div></div>
<div class="a" style="left:1229.25px;top:366.25px;width:16.5px;height:12.33px;overflow:hidden"><div class="t" style="right:2.5px;top:0.900px;color:#2a2a2a;letter-spacing:0px">0</div></div>
<div class="a" style="left:152.5px;top:379.08px;width:28px;height:12.33px;overflow:hidden"><div class="t" style="left:0;right:0;text-align:center;top:0.900px;color:#333">3</div></div>
<div class="a" style="left:181.5px;top:379.08px;width:198.5px;height:12.33px;overflow:hidden"><div class="t" style="left:2px;top:0.900px;color:#2a2a2a;letter-spacing:0px">(BH) Chi phí thanh toán-33:PL2</div></div>
<div class="a" style="left:381.0px;top:379.08px;width:74.75px;height:12.33px;overflow:hidden"><div class="t" style="right:1.35px;top:0.900px;color:#2a2a2a;letter-spacing:0.15px">6,560,000.000</div></div>
<div class="a" style="left:456.75px;top:379.08px;width:199.0px;height:12.33px;overflow:hidden"><div class="t" style="left:2.5px;top:0.900px;color:#2a2a2a;letter-spacing:0.08px">Unifi 24 port Gigabit</div></div>
<div class="a" style="left:656.75px;top:379.08px;width:73.25px;height:12.33px;overflow:hidden"><div class="t" style="left:1.5px;top:0.900px;color:#2a2a2a;letter-spacing:0px">Phòng Quản lý</div></div>
<div class="a" style="left:1056.75px;top:379.08px;width:150.25px;height:12.33px;overflow:hidden"><div class="t" style="left:2px;top:0.900px;color:#2a2a2a;letter-spacing:0.1px">6417946-(BH) Chi phí thanh toán</div></div>
<div class="a" style="left:1229.25px;top:379.08px;width:16.5px;height:12.33px;overflow:hidden"><div class="t" style="right:2.5px;top:0.900px;color:#2a2a2a;letter-spacing:0px">0</div></div>
<div class="a" style="left:152.5px;top:391.92px;width:28px;height:12.33px;overflow:hidden"><div class="t" style="left:0;right:0;text-align:center;top:0.900px;color:#333">4</div></div>
<div class="a" style="left:181.5px;top:391.92px;width:198.5px;height:12.33px;overflow:hidden"><div class="t" style="left:2px;top:0.900px;color:#2a2a2a;letter-spacing:0px">(BH) Chi phí thanh toán-33:PL2</div></div>
<div class="a" style="left:381.0px;top:391.92px;width:74.75px;height:12.33px;overflow:hidden"><div class="t" style="right:1.35px;top:0.900px;color:#2a2a2a;letter-spacing:0.15px">1,800,000.000</div></div>
<div class="a" style="left:456.75px;top:391.92px;width:199.0px;height:12.33px;overflow:hidden"><div class="t" style="left:2.5px;top:0.900px;color:#2a2a2a;letter-spacing:0.08px"> SFP module 1.25G SM 20km 1310nm Dual</div></div>
<div class="a" style="left:656.75px;top:391.92px;width:73.25px;height:12.33px;overflow:hidden"><div class="t" style="left:1.5px;top:0.900px;color:#2a2a2a;letter-spacing:0px">Phòng Quản lý</div></div>
<div class="a" style="left:1056.75px;top:391.92px;width:150.25px;height:12.33px;overflow:hidden"><div class="t" style="left:2px;top:0.900px;color:#2a2a2a;letter-spacing:0.1px">6417946-(BH) Chi phí thanh toán</div></div>
<div class="a" style="left:1229.25px;top:391.92px;width:16.5px;height:12.33px;overflow:hidden"><div class="t" style="right:2.5px;top:0.900px;color:#2a2a2a;letter-spacing:0px">0</div></div>
<div class="a" style="left:152.5px;top:404.75px;width:28px;height:12.33px;overflow:hidden"><div class="t" style="left:0;right:0;text-align:center;top:0.900px;color:#333">5</div></div>
<div class="a" style="left:181.5px;top:404.75px;width:198.5px;height:12.33px;overflow:hidden"><div class="t" style="left:2px;top:0.900px;color:#2a2a2a;letter-spacing:0px">(BH) Chi phí thanh toán-33:PL2</div></div>
<div class="a" style="left:381.0px;top:404.75px;width:74.75px;height:12.33px;overflow:hidden"><div class="t" style="right:1.35px;top:0.900px;color:#2a2a2a;letter-spacing:0.15px">600,000.000</div></div>
<div class="a" style="left:456.75px;top:404.75px;width:199.0px;height:12.33px;overflow:hidden"><div class="t" style="left:2.5px;top:0.900px;color:#2a2a2a;letter-spacing:0.08px">Module quang Handar 1Gbps, 10km, LC Dup</div></div>
<div class="a" style="left:656.75px;top:404.75px;width:73.25px;height:12.33px;overflow:hidden"><div class="t" style="left:1.5px;top:0.900px;color:#2a2a2a;letter-spacing:0px">Phòng Quản lý</div></div>
<div class="a" style="left:1056.75px;top:404.75px;width:150.25px;height:12.33px;overflow:hidden"><div class="t" style="left:2px;top:0.900px;color:#2a2a2a;letter-spacing:0.1px">6417946-(BH) Chi phí thanh toán</div></div>
<div class="a" style="left:1229.25px;top:404.75px;width:16.5px;height:12.33px;overflow:hidden"><div class="t" style="right:2.5px;top:0.900px;color:#2a2a2a;letter-spacing:0px">0</div></div>
<div class="a" style="left:152.5px;top:417.58px;width:28px;height:12.33px;overflow:hidden"><div class="t" style="left:0;right:0;text-align:center;top:0.900px;color:#333">6</div></div>
<div class="a" style="left:181.5px;top:417.58px;width:198.5px;height:12.33px;overflow:hidden"><div class="t" style="left:2px;top:0.900px;color:#2a2a2a;letter-spacing:0px">(BH) Chi phí thanh toán-33:PL2</div></div>
<div class="a" style="left:381.0px;top:417.58px;width:74.75px;height:12.33px;overflow:hidden"><div class="t" style="right:1.35px;top:0.900px;color:#2a2a2a;letter-spacing:0.15px">174,000.000</div></div>
<div class="a" style="left:456.75px;top:417.58px;width:199.0px;height:12.33px;overflow:hidden"><div class="t" style="left:2.5px;top:0.900px;color:#2a2a2a;letter-spacing:0.08px">Dây nhảy quang single mode LC-LC duplex 3</div></div>
<div class="a" style="left:656.75px;top:417.58px;width:73.25px;height:12.33px;overflow:hidden"><div class="t" style="left:1.5px;top:0.900px;color:#2a2a2a;letter-spacing:0px">Phòng Quản lý</div></div>
<div class="a" style="left:1056.75px;top:417.58px;width:150.25px;height:12.33px;overflow:hidden"><div class="t" style="left:2px;top:0.900px;color:#2a2a2a;letter-spacing:0.1px">6417946-(BH) Chi phí thanh toán</div></div>
<div class="a" style="left:1229.25px;top:417.58px;width:16.5px;height:12.33px;overflow:hidden"><div class="t" style="right:2.5px;top:0.900px;color:#2a2a2a;letter-spacing:0px">0</div></div>
<div class="a" style="left:152.5px;top:430.42px;width:28px;height:12.33px;overflow:hidden"><div class="t" style="left:0;right:0;text-align:center;top:0.900px;color:#333">7</div></div>
<div class="a" style="left:181.5px;top:430.42px;width:198.5px;height:12.33px;overflow:hidden"><div class="t" style="left:2px;top:0.900px;color:#2a2a2a;letter-spacing:0px">(BH) Chi phí thanh toán-33:PL2</div></div>
<div class="a" style="left:381.0px;top:430.42px;width:74.75px;height:12.33px;overflow:hidden"><div class="t" style="right:1.35px;top:0.900px;color:#2a2a2a;letter-spacing:0.15px">250,000.000</div></div>
<div class="a" style="left:456.75px;top:430.42px;width:199.0px;height:12.33px;overflow:hidden"><div class="t" style="left:2.5px;top:0.900px;color:#2a2a2a;letter-spacing:0.08px">Dây cáp mạng gắn đầu nối CAT6 UTP</div></div>
<div class="a" style="left:656.75px;top:430.42px;width:73.25px;height:12.33px;overflow:hidden"><div class="t" style="left:1.5px;top:0.900px;color:#2a2a2a;letter-spacing:0px">Phòng Quản lý</div></div>
<div class="a" style="left:1056.75px;top:430.42px;width:150.25px;height:12.33px;overflow:hidden"><div class="t" style="left:2px;top:0.900px;color:#2a2a2a;letter-spacing:0.1px">6417946-(BH) Chi phí thanh toán</div></div>
<div class="a" style="left:1229.25px;top:430.42px;width:16.5px;height:12.33px;overflow:hidden"><div class="t" style="right:2.5px;top:0.900px;color:#2a2a2a;letter-spacing:0px">0</div></div>
<div class="a" style="left:152.5px;top:443.25px;width:28px;height:12.33px;overflow:hidden"><div class="t" style="left:0;right:0;text-align:center;top:0.900px;color:#333">8</div></div>
<div class="a" style="left:181.5px;top:443.25px;width:198.5px;height:12.33px;overflow:hidden"><div class="t" style="left:2px;top:0.900px;color:#2a2a2a;letter-spacing:0px">(BH) Chi phí thanh toán-33:PL2</div></div>
<div class="a" style="left:381.0px;top:443.25px;width:74.75px;height:12.33px;overflow:hidden"><div class="t" style="right:1.35px;top:0.900px;color:#2a2a2a;letter-spacing:0.15px">2,754,720.000</div></div>
<div class="a" style="left:456.75px;top:443.25px;width:199.0px;height:12.33px;overflow:hidden"><div class="t" style="left:2.5px;top:0.900px;color:#2a2a2a;letter-spacing:0.08px">VAT 8%</div></div>
<div class="a" style="left:656.75px;top:443.25px;width:73.25px;height:12.33px;overflow:hidden"><div class="t" style="left:1.5px;top:0.900px;color:#2a2a2a;letter-spacing:0px">Phòng Quản lý</div></div>
<div class="a" style="left:1056.75px;top:443.25px;width:150.25px;height:12.33px;overflow:hidden"><div class="t" style="left:2px;top:0.900px;color:#2a2a2a;letter-spacing:0.1px">6417946-(BH) Chi phí thanh toán</div></div>
<div class="a" style="left:1229.25px;top:443.25px;width:16.5px;height:12.33px;overflow:hidden"><div class="t" style="right:2.5px;top:0.900px;color:#2a2a2a;letter-spacing:0px">0</div></div>
<div class="a" style="left:731.0px;top:353.42px;width:212.25px;height:12.33px;overflow:hidden"><div class="t" style="left:2px;top:0.900px;color:#2a2a2a;letter-spacing:0px">Công ty TNHH công nghệ Việt Thái Dương</div></div>
<div class="a" style="left:961.75px;top:353.42px;width:76.5px;height:12.33px;overflow:hidden"><div class="t" style="left:2.5px;top:0.900px;color:#2a2a2a;letter-spacing:0px">Chuyển khoản</div></div>
<div class="a" style="left:1298.0px;top:353.42px;width:116.0px;height:12.33px;overflow:hidden"><div class="t" style="left:3px;top:0.900px;color:#2a2a2a;letter-spacing:0px">Techcombank</div></div>
<div class="a" style="left:1415.0px;top:353.42px;width:109.70000000000005px;height:12.33px;overflow:hidden"><div class="t" style="left:3px;top:0.900px;color:#2a2a2a;letter-spacing:0px">19134399210019</div></div>
<div class="a" style="left:1525.7px;top:353.42px;width:54.399999999999864px;height:12.33px;overflow:hidden"><div class="t" style="left:2px;top:0.900px;color:#2a2a2a;letter-spacing:0px">VND</div></div>
<div class="a" style="left:152.5px;top:456.08px;width:28px;height:12.33px;overflow:hidden"><div class="t" style="left:0;right:0;text-align:center;top:0.900px;color:#333">A</div></div>
<div class="a" style="left:152.5px;top:468.92px;width:28px;height:12.33px;overflow:hidden"><div class="t" style="left:0;right:0;text-align:center;top:0.900px;color:#333">A</div></div>
<div class="a" style="left:152.5px;top:481.75px;width:28px;height:12.33px;overflow:hidden"><div class="t" style="left:0;right:0;text-align:center;top:0.900px;color:#333">A</div></div>
<div class="a" style="left:152.5px;top:494.58px;width:28px;height:12.33px;overflow:hidden"><div class="t" style="left:0;right:0;text-align:center;top:0.900px;color:#333">A</div></div>
<div class="a" style="left:152.5px;top:507.42px;width:28px;height:12.33px;overflow:hidden"><div class="t" style="left:0;right:0;text-align:center;top:0.900px;color:#333">A</div></div>
<div class="a" style="left:152.5px;top:520.25px;width:28px;height:12.33px;overflow:hidden"><div class="t" style="left:0;right:0;text-align:center;top:0.900px;color:#333">A</div></div>
<div class="a" style="left:152.5px;top:533.08px;width:28px;height:12.33px;overflow:hidden"><div class="t" style="left:0;right:0;text-align:center;top:0.900px;color:#333">A</div></div>
<div class="a" style="left:152.5px;top:545.92px;width:28px;height:12.33px;overflow:hidden"><div class="t" style="left:0;right:0;text-align:center;top:0.900px;color:#333">A</div></div>
<div class="a" style="left:152.5px;top:558.75px;width:28px;height:12.33px;overflow:hidden"><div class="t" style="left:0;right:0;text-align:center;top:0.900px;color:#333">A</div></div>
<div class="a" style="left:152.5px;top:571.58px;width:28px;height:12.33px;overflow:hidden"><div class="t" style="left:0;right:0;text-align:center;top:0.900px;color:#333">A</div></div>
<div class="a" style="left:152.5px;top:584.42px;width:28px;height:12.33px;overflow:hidden"><div class="t" style="left:0;right:0;text-align:center;top:0.900px;color:#333">A</div></div>
<div class="a" style="left:152.5px;top:597.25px;width:28px;height:12.33px;overflow:hidden"><div class="t" style="left:0;right:0;text-align:center;top:0.900px;color:#333">A</div></div>
<div class="a" style="left:152.5px;top:610.08px;width:28px;height:12.33px;overflow:hidden"><div class="t" style="left:0;right:0;text-align:center;top:0.900px;color:#333">A</div></div>
<div class="a" style="left:152.5px;top:622.92px;width:28px;height:12.33px;overflow:hidden"><div class="t" style="left:0;right:0;text-align:center;top:0.900px;color:#333">A</div></div>
<div class="a" style="left:152.5px;top:635.75px;width:28px;height:12.33px;overflow:hidden"><div class="t" style="left:0;right:0;text-align:center;top:0.900px;color:#333">A</div></div>
<div class="a" style="left:152.5px;top:648.58px;width:28px;height:12.33px;overflow:hidden"><div class="t" style="left:0;right:0;text-align:center;top:0.900px;color:#333">A</div></div>
<div class="a" style="left:152.5px;top:661.42px;width:28px;height:12.33px;overflow:hidden"><div class="t" style="left:0;right:0;text-align:center;top:0.900px;color:#333">A</div></div>
<div class="a" style="left:152.5px;top:674.25px;width:28px;height:12.33px;overflow:hidden"><div class="t" style="left:0;right:0;text-align:center;top:0.900px;color:#333">A</div></div>
<div class="a" style="left:152.5px;top:687.08px;width:28px;height:12.33px;overflow:hidden"><div class="t" style="left:0;right:0;text-align:center;top:0.900px;color:#333">A</div></div>
<div class="a" style="left:152.5px;top:699.92px;width:28px;height:12.33px;overflow:hidden"><div class="t" style="left:0;right:0;text-align:center;top:0.900px;color:#333">A</div></div>
<div class="a" style="left:180.5px;top:455.08px;width:200.5px;height:13.83px;border:1px solid #9a4fc0;box-shadow:inset 0 0 0 1px #2a2a3a"></div>
<div class="a" style="left:1024.25px;top:456.58px;width:14px;height:11.33px;background:#e6e6e6;border-top:1px solid #fff;border-left:1px solid #fff;border-right:1px solid #3c3c3c;border-bottom:1px solid #3c3c3c"></div>
<svg class="a" style="left:1027.75px;top:460.58px" width="7" height="4" viewBox="0 0 7 4"><path d="M0 0h7L3.500 4z" fill="#111"/></svg>
<div class="a" style="left:1214.25px;top:456.58px;width:14px;height:11.33px;background:#e6e6e6;border-top:1px solid #fff;border-left:1px solid #fff;border-right:1px solid #3c3c3c;border-bottom:1px solid #3c3c3c"></div>
<svg class="a" style="left:1217.75px;top:460.58px" width="7" height="4" viewBox="0 0 7 4"><path d="M0 0h7L3.500 4z" fill="#111"/></svg></body></html>
